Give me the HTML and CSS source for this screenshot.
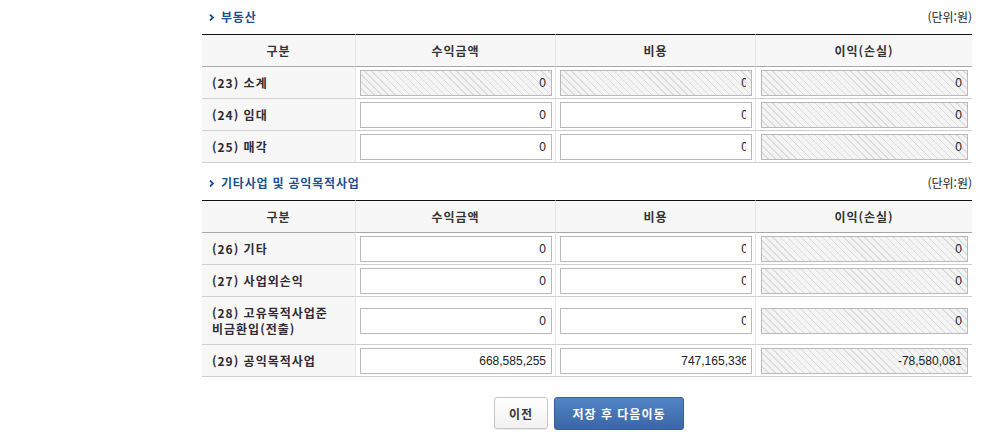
FILE: index.html
```html
<!DOCTYPE html>
<html lang="ko">
<head>
<meta charset="utf-8">
<title>수익사업 손익</title>
<link rel="stylesheet" href="styles.css">
</head>
<body>
<div class="page">
  <section class="sec">
    <div class="sec-head">
      <h3 class="sec-title"><svg class="chev" width="5" height="7" viewBox="0 0 5 7"><path d="M1 0.5 L4 3.5 L1 6.5" fill="none" stroke="#1d4f91" stroke-width="1.8"/></svg>부동산</h3>
      <span class="unit">(단위:원)</span>
    </div>
    <table class="grid">
      <thead>
        <tr><th class="c1">구분</th><th class="c2">수익금액</th><th class="c3">비용</th><th class="c4">이익(손실)</th></tr>
      </thead>
      <tbody>
        <tr>
          <td class="lbl">(23) 소계</td>
          <td class="cell"><div class="fld ro"><div class="in">0</div></div></td>
          <td class="cell"><div class="fld ro clip"><div class="in"><span>0</span></div></div></td>
          <td class="cell last"><div class="fld ro"><div class="in">0</div></div></td>
        </tr>
        <tr>
          <td class="lbl">(24) 임대</td>
          <td class="cell"><div class="fld"><div class="in">0</div></div></td>
          <td class="cell"><div class="fld clip"><div class="in"><span>0</span></div></div></td>
          <td class="cell last"><div class="fld ro"><div class="in">0</div></div></td>
        </tr>
        <tr>
          <td class="lbl">(25) 매각</td>
          <td class="cell"><div class="fld"><div class="in">0</div></div></td>
          <td class="cell"><div class="fld clip"><div class="in"><span>0</span></div></div></td>
          <td class="cell last"><div class="fld ro"><div class="in">0</div></div></td>
        </tr>
      </tbody>
    </table>
  </section>

  <section class="sec sec2">
    <div class="sec-head">
      <h3 class="sec-title"><svg class="chev" width="5" height="7" viewBox="0 0 5 7"><path d="M1 0.5 L4 3.5 L1 6.5" fill="none" stroke="#1d4f91" stroke-width="1.8"/></svg>기타사업 및 공익목적사업</h3>
      <span class="unit">(단위:원)</span>
    </div>
    <table class="grid">
      <thead>
        <tr><th class="c1">구분</th><th class="c2">수익금액</th><th class="c3">비용</th><th class="c4">이익(손실)</th></tr>
      </thead>
      <tbody>
        <tr>
          <td class="lbl">(26) 기타</td>
          <td class="cell"><div class="fld"><div class="in">0</div></div></td>
          <td class="cell"><div class="fld clip"><div class="in"><span>0</span></div></div></td>
          <td class="cell last"><div class="fld ro"><div class="in">0</div></div></td>
        </tr>
        <tr>
          <td class="lbl">(27) 사업외손익</td>
          <td class="cell"><div class="fld"><div class="in">0</div></div></td>
          <td class="cell"><div class="fld clip"><div class="in"><span>0</span></div></div></td>
          <td class="cell last"><div class="fld ro"><div class="in">0</div></div></td>
        </tr>
        <tr class="tall">
          <td class="lbl">(28) 고유목적사업준<br>비금환입(전출)</td>
          <td class="cell"><div class="fld"><div class="in">0</div></div></td>
          <td class="cell"><div class="fld clip"><div class="in"><span>0</span></div></div></td>
          <td class="cell last"><div class="fld ro"><div class="in">0</div></div></td>
        </tr>
        <tr>
          <td class="lbl">(29) 공익목적사업</td>
          <td class="cell"><div class="fld"><div class="in">668,585,255</div></div></td>
          <td class="cell"><div class="fld clip"><div class="in"><span>747,165,336</span></div></div></td>
          <td class="cell last"><div class="fld ro"><div class="in">-78,580,081</div></div></td>
        </tr>
      </tbody>
    </table>
  </section>

  <div class="actions">
    <button class="btn btn-prev" type="button">이전</button>
    <button class="btn btn-next" type="button">저장 후 다음이동</button>
  </div>
</div>
</body>
</html>
```

FILE: styles.css
```css
html, body {
  margin: 0;
  padding: 0;
  background: #fff;
}
body {
  font-family: "Noto Sans CJK KR", "Noto Sans", sans-serif;
  font-size: 12px;
  color: #333;
}
.page {
  width: 770px;
  margin-left: 202px;
}
.sec-head {
  display: flex;
  justify-content: space-between;
  align-items: center;
  height: 34px;
}
.sec2 .sec-head {
  height: 37px;
  align-items: flex-end;
}
.sec2 .sec-title, .sec2 .unit {
  margin-bottom: 9px;
}
.sec-title {
  margin: 0;
  display: flex;
  align-items: center;
  font-size: 12px;
  font-weight: bold;
  color: #1d4f91;
  letter-spacing: 0.8px;
  line-height: 16px;
}
.chev {
  margin: 0 7px 0 7px;
}
.unit {
  font-size: 12px;
  color: #222;
  line-height: 16px;
}
.grid {
  width: 770px;
  border-collapse: separate;
  border-spacing: 0;
  table-layout: fixed;
}
.grid th, .grid td {
  box-sizing: border-box;
  padding: 0;
}
.grid th {
  height: 33px;
  background: #f7f7f7;
  border-top: 1px solid #111;
  border-bottom: 1px solid #a8a8a8;
  font-weight: bold;
  font-size: 12px;
  color: #333;
  text-align: center;
  letter-spacing: 1px;
}
.grid th + th {
  border-left: 1px solid #e6e6e6;
}
.c1 { width: 153px; }
.c2 { width: 200px; }
.c3 { width: 200px; }
.c4 { width: 217px; }
.grid td {
  height: 32px;
  border-bottom: 1px solid #cfcfcf;
  vertical-align: middle;
}
.grid tr.tall td {
  height: 48px;
}
.lbl {
  background: #f7f7f7;
  padding-left: 10px !important;
  font-weight: bold;
  color: #2f2a33;
  letter-spacing: 1px;
  line-height: 16px;
}
.cell {
  border-left: 1px solid #e6e6e6;
  padding: 1px 3px 0 4px !important;
}
.cell.last {
  padding: 1px 4px 0 5px !important;
}
.fld {
  height: 26px;
  box-sizing: border-box;
  border: 1px solid #b9b9b9;
  background: #fff;
  padding: 0 5px 0 3px;
}
.fld.ro {
  background-color: #f3f3f3;
  background-image: repeating-linear-gradient(45deg, #f4f4f4 0, #f4f4f4 4px, #dcdcdc 4px, #dcdcdc 5px);
}
.in {
  overflow: hidden;
  white-space: nowrap;
  text-align: right;
  line-height: 24px;
  font-family: "Liberation Sans", Arial, sans-serif;
  font-size: 12px;
  color: #222;
}
.clip .in span {
  display: inline-block;
  margin-right: -2px;
}
.actions {
  display: flex;
  justify-content: center;
  gap: 6px;
  margin-top: 20px;
  padding-left: 4px;
}
.btn {
  font-family: "Noto Sans CJK KR", sans-serif;
  font-size: 12px;
  font-weight: bold;
  border-radius: 3px;
  cursor: pointer;
  padding: 0;
  letter-spacing: 1px;
}
.btn-prev {
  width: 54px;
  height: 32px;
  background: linear-gradient(#ffffff, #f1f1f1);
  border: 1px solid #c6c6c6;
  color: #333;
  box-shadow: 0 1px 1px rgba(0,0,0,0.08);
}
.btn-next {
  width: 130px;
  height: 33px;
  background: linear-gradient(#5284c6, #3a66a6);
  border: 1px solid #36609b;
  color: #fff;
  box-shadow: 0 1px 1px rgba(0,0,0,0.2);
}
```
